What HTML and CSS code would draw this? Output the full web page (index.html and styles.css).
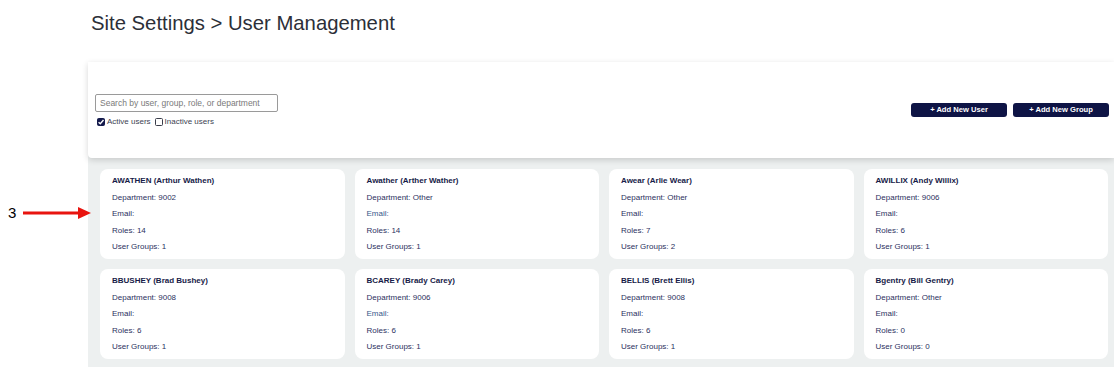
FILE: index.html
```html
<!DOCTYPE html>
<html lang="en">
<head>
<meta charset="utf-8">
<title>Site Settings &gt; User Management</title>
<link rel="stylesheet" href="styles.css">
</head>
<body>
<div class="annotation">
  <span class="anno-num">3</span>
  <svg class="anno-arrow" width="70" height="14" viewBox="0 0 70 14"><line x1="0" y1="7" x2="58" y2="7" stroke="#e8140f" stroke-width="3"/><polygon points="55,1 68,7 55,13" fill="#e8140f"/></svg>
</div>
<div class="page">
  <h1 class="title">Site Settings &gt; User Management</h1>
  <section class="panel">
    <div class="toolbar">
      <div class="filters">
        <input class="search" type="text" placeholder="Search by user, group, role, or department">
        <div class="checks">
          <label class="check"><span class="box checked"><svg width="8" height="8" viewBox="0 0 8 8"><path d="M1.6 4.2 L3.3 5.8 L6.5 2" fill="none" stroke="#fff" stroke-width="1.4"/></svg></span>Active users</label>
          <label class="check"><span class="box"></span>Inactive users</label>
        </div>
      </div>
      <div class="actions">
        <button class="btn">+ Add New User</button>
        <button class="btn">+ Add New Group</button>
      </div>
    </div>
    <div class="grid">
      <div class="card"><div class="name">AWATHEN (Arthur Wathen)</div><div class="row">Department: 9002</div><div class="row">Email:</div><div class="row">Roles: 14</div><div class="row">User Groups: 1</div></div>
      <div class="card"><div class="name">Awather (Arther Wather)</div><div class="row">Department: Other</div><div class="row email">Email:</div><div class="row">Roles: 14</div><div class="row">User Groups: 1</div></div>
      <div class="card"><div class="name">Awear (Arlie Wear)</div><div class="row">Department: Other</div><div class="row">Email:</div><div class="row">Roles: 7</div><div class="row">User Groups: 2</div></div>
      <div class="card"><div class="name">AWILLIX (Andy Willix)</div><div class="row">Department: 9006</div><div class="row">Email:</div><div class="row">Roles: 6</div><div class="row">User Groups: 1</div></div>
      <div class="card"><div class="name">BBUSHEY (Brad Bushey)</div><div class="row">Department: 9008</div><div class="row">Email:</div><div class="row">Roles: 6</div><div class="row">User Groups: 1</div></div>
      <div class="card"><div class="name">BCAREY (Brady Carey)</div><div class="row">Department: 9006</div><div class="row email">Email:</div><div class="row">Roles: 6</div><div class="row">User Groups: 1</div></div>
      <div class="card"><div class="name">BELLIS (Brett Ellis)</div><div class="row">Department: 9008</div><div class="row">Email:</div><div class="row">Roles: 6</div><div class="row">User Groups: 1</div></div>
      <div class="card"><div class="name">Bgentry (Bill Gentry)</div><div class="row">Department: Other</div><div class="row">Email:</div><div class="row">Roles: 0</div><div class="row">User Groups: 0</div></div>
    </div>
  </section>
</div>
</body>
</html>
```
FILE: styles.css
```css
html, body {
  margin: 0;
  padding: 0;
  background: #ffffff;
  overflow: hidden;
}
body {
  font-family: "Liberation Sans", Arial, sans-serif;
  position: relative;
  height: 367px;
}
.annotation {
  position: absolute;
  left: 8px;
  top: 204px;
  display: flex;
  align-items: center;
  gap: 2px;
}
.anno-num {
  font-family: "Liberation Sans", Arial, sans-serif;
  font-size: 15px;
  color: #000;
  line-height: 17px;
  width: 13px;
}
.anno-arrow {
  display: block;
}
.page {
  padding-left: 88px;
}
.title {
  margin: 12px 0 0 3px;
  font-size: 20.3px;
  line-height: 23px;
  font-weight: normal;
  color: #2c2f38;
}
.panel {
  margin-top: 27px;
  background: #edf0f0;
  padding-bottom: 8px;
}
.toolbar {
  height: 96px;
  background: #fff;
  box-shadow: 0 2px 6px rgba(0, 0, 0, 0.16);
  border-radius: 0 0 0 4px;
  display: flex;
  align-items: center;
  justify-content: space-between;
  padding: 0 5px 0 7px;
  position: relative;
}
.filters {
  display: flex;
  flex-direction: column;
  gap: 5px;
}
.search {
  box-sizing: border-box;
  width: 183px;
  height: 18px;
  border: 1px solid #9a9a9a;
  border-radius: 2px;
  padding: 0 4px;
  font-family: "Liberation Sans", Arial, sans-serif;
  font-size: 8.5px;
  color: #333;
  outline: none;
}
.search::placeholder {
  color: #7a7a7a;
}
.checks {
  display: flex;
  gap: 4px;
  padding-left: 2px;
}
.check {
  display: flex;
  align-items: center;
  gap: 2px;
  font-size: 8px;
  color: #3d3f52;
  line-height: 10px;
}
.box {
  box-sizing: border-box;
  width: 8px;
  height: 8px;
  border: 1px solid #3a3d4a;
  border-radius: 1.5px;
  background: #fff;
  display: flex;
}
.box.checked {
  background: #141a4c;
  border-color: #141a4c;
}
.box svg {
  margin: -1px;
}
.actions {
  display: flex;
  gap: 6px;
}
.btn {
  width: 96px;
  height: 14px;
  padding: 0;
  border: none;
  border-radius: 3px;
  background: #0e1445;
  color: #fff;
  font-family: "Liberation Sans", Arial, sans-serif;
  font-weight: bold;
  font-size: 7.6px;
  line-height: 14px;
}
.grid {
  display: grid;
  grid-template-columns: repeat(4, 1fr);
  gap: 10px;
  padding: 11px 6px 0 12px;
}
.card {
  background: #fff;
  border-radius: 8px;
  padding: 4px 12px 3px;
  height: 90px;
  box-sizing: border-box;
}
.name, .row {
  font-size: 8px;
  line-height: 16.5px;
  white-space: nowrap;
}
.name {
  font-weight: bold;
  color: #171b48;
}
.row {
  color: #2c3160;
}
.row.email {
  color: #37588a;
}
```
